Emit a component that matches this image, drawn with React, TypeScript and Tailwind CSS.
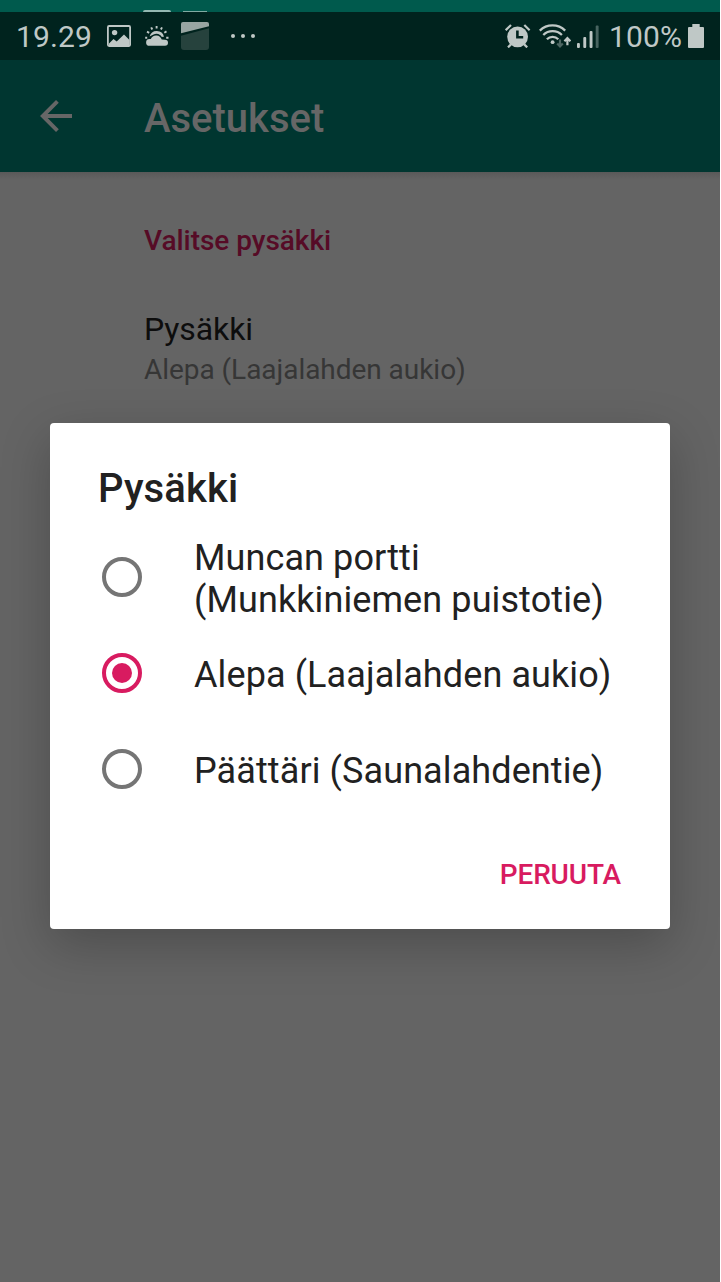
import React from "react";

const ICON = "#bfc8c6";

function ImageIcon() {
  return (
    <svg className="ml-[15px] h-6 w-6 shrink-0" viewBox="0 0 24 24" fill="none">
      <rect x="0.9" y="2" width="22.2" height="20" rx="1.2" stroke={ICON} strokeWidth="1.8" />
      <circle cx="7.6" cy="8.6" r="2.7" fill={ICON} />
      <path d="M2 19.5 6.5 15l3.2 2.5 7.3-7 5.5 5.5V22H2z" fill={ICON} />
    </svg>
  );
}

function WeatherIcon() {
  return (
    <svg className="ml-[14px] h-6 w-6 shrink-0" viewBox="0 0 24 24" fill="none">
      <g stroke={ICON} strokeWidth="1.9">
        <path d="M11.6 2v2.4M6.2 3.3l1.1 2.2M17 3.3l-1.1 2.2M2 7.6l2.2 1.2M21.5 7.4l-2.2 1.3M.2 13.8h2M21.2 13.8h2.3" />
      </g>
      <path d="M4.6 12.6a7.4 7.4 0 0 1 14.4.2c-.8.1-1.4.1-2.1.3a6.2 6.2 0 0 0-8.3-2.7c-1.6.7-2.6 1.4-4 2.2z" fill={ICON} />
      <path d="M4.5 21.8a3.4 3.4 0 0 1 0-6.8h1.3a5.8 5.8 0 0 1 10.9.6l3.3.2a3 3 0 0 1 0 6z" fill={ICON} />
    </svg>
  );
}

function CardIcon() {
  return (
    <svg className="ml-[12px] h-7 w-7 shrink-0" viewBox="0 0 28 28">
      <path d="M0 13.8 28 6.2V25a3 3 0 0 1-3 3H3a3 3 0 0 1-3-3z" fill="#26423d" />
      <path d="M0 11.3V2a2 2 0 0 1 2-2h24a2 2 0 0 1 2 2v2.2z" fill="#98a5a2" />
    </svg>
  );
}

function AlarmIcon() {
  return (
    <svg className="h-6 w-[26px] shrink-0" viewBox="0 0 26 24" fill="none">
      <circle cx="12.6" cy="12.8" r="10.4" fill={ICON} />
      <path d="M.7 6.2 6 1M24.6 6.2 19.3 1M3 23.4l3-3M22.2 23.4l-3-3" stroke={ICON} strokeWidth="2.2" />
      <path d="M12.4 6.4v6.8h5.8" stroke="#00231e" strokeWidth="2.6" />
    </svg>
  );
}

function WifiIcon() {
  return (
    <svg className="ml-[8px] h-6 w-8 shrink-0" viewBox="0 0 32 24" fill="none">
      <g stroke={ICON} strokeWidth="2.3">
        <path d="M.8 6.6a18.2 18.2 0 0 1 25.4 0" />
        <path d="M4.3 11a13.2 13.2 0 0 1 18.6 0" />
        <path d="M7.9 15.2a8 8 0 0 1 11.4 0" />
      </g>
      <circle cx="13.6" cy="18.2" r="1.9" fill={ICON} />
      <path d="M21 15.6v6M18.2 19.4l2.8 3 2.8-3" stroke="#4d6662" strokeWidth="2.2" />
      <path d="M28.4 21.3v-6M25.4 17.3l3-3.1 3 3.1" stroke={ICON} strokeWidth="2.2" />
    </svg>
  );
}

function SignalIcon() {
  return (
    <svg className="ml-[6px] h-6 w-[22px] shrink-0" viewBox="0 0 22 24">
      <rect x="0" y="19" width="2.9" height="5" rx="1" fill={ICON} />
      <rect x="6.3" y="13" width="2.9" height="11" rx="1" fill={ICON} />
      <rect x="12.6" y="7" width="2.9" height="17" rx="1" fill={ICON} />
      <rect x="18.7" y="1.5" width="2.9" height="22.5" rx="1" fill="#486460" />
    </svg>
  );
}

function BatteryIcon() {
  return (
    <svg className="ml-[6px] h-6 w-4 shrink-0" viewBox="0 0 16 24">
      <path d="M4.3 0h7.4v3H15a1 1 0 0 1 1 1v19a1 1 0 0 1-1 1H1a1 1 0 0 1-1-1V4a1 1 0 0 1 1-1h3.3z" fill={ICON} />
    </svg>
  );
}

function Radio({ checked }: { checked: boolean }) {
  return (
    <span
      className={
        checked
          ? "flex h-10 w-10 shrink-0 items-center justify-center rounded-full border-4 border-[#d81b60]"
          : "h-10 w-10 shrink-0 rounded-full border-4 border-[#757575]"
      }
    >
      {checked && <span className="h-5 w-5 rounded-full bg-[#d81b60]" />}
    </span>
  );
}

const stops = [
  { lines: ["Muncan portti", "(Munkkiniemen puistotie)"], checked: false },
  { lines: ["Alepa (Laajalahden aukio)"], checked: true },
  { lines: ["Päättäri (Saunalahdentie)"], checked: false },
];

export default function App() {
  return (
    <div className="relative flex h-[1282px] w-[720px] flex-col overflow-hidden bg-[#646464] font-[Roboto,sans-serif]">
      <div className="flex h-3 shrink-0 items-end bg-[#005a4d] pl-[143px]">
        <span className="h-[2px] w-7 rounded-t-sm bg-[#94b8b2]" />
        <span className="ml-3 h-px w-6 bg-[#80aaa2]" />
      </div>
      <div className="flex h-12 shrink-0 items-center bg-[#00231e] pl-4 pr-4 text-[#bfc8c6]">
        <span className="mt-0.5 w-[76px] whitespace-nowrap text-[30px] leading-[30px] tracking-[0.1px]">19.29</span>
        <ImageIcon />
        <WeatherIcon />
        <CardIcon />
        <span className="ml-[22px] flex gap-[6px]">
          <i className="h-1 w-1 rounded-full bg-[#bfc8c6]" />
          <i className="h-1 w-1 rounded-full bg-[#bfc8c6]" />
          <i className="h-1 w-1 rounded-full bg-[#bfc8c6]" />
        </span>
        <span className="ml-auto flex items-center">
          <AlarmIcon />
          <WifiIcon />
          <SignalIcon />
          <span className="ml-[10px] mt-0.5 w-[73px] whitespace-nowrap text-[30px] leading-[28px] tracking-[0.1px]">100%</span>
          <BatteryIcon />
        </span>
      </div>
      <header className="flex h-28 shrink-0 items-center bg-[#003630] pl-10 text-[#666]">
        <svg className="h-8 w-8 shrink-0" viewBox="0 0 32 32" fill="none" stroke="#666" strokeWidth="3.9">
          <path d="M32 16H3M17.4 1.4 2.8 16l14.6 14.6" />
        </svg>
        <h1 className="ml-[72px] mt-1.5 text-[40px] font-medium leading-[48px]">Asetukset</h1>
      </header>
      <main className="flex flex-1 flex-col bg-[linear-gradient(#595959,#646464_8px)] pl-36 pt-[53px]">
        <h2 className="text-[28px] font-medium leading-8 tracking-[-0.04px] text-[#560b26]">Valitse pysäkki</h2>
        <p className="mt-[53px] text-[32px] leading-[38px] tracking-[-0.1px] text-[#0d0d0d]">Pysäkki</p>
        <p className="mt-[6px] text-[28px] leading-8 tracking-[-0.04px] text-[#363636]">Alepa (Laajalahden aukio)</p>
      </main>

      <section
        role="dialog"
        className="absolute left-[50px] top-[423px] flex h-[506px] w-[620px] flex-col rounded-[4px] bg-white px-12 pt-[42px] text-[#212121] shadow-[0_16px_50px_rgba(0,0,0,0.23)]"
      >
        <h2 className="text-[40px] font-medium leading-[48px] tracking-[0.1px]">Pysäkki</h2>
        <div className="mt-[16px] flex flex-col">
          {stops.map((stop) => (
            <label key={stop.lines[0]} className="flex h-24 items-center pl-1">
              <Radio checked={stop.checked} />
              <span className="ml-[52px] mt-1 whitespace-nowrap text-[36px] leading-[42px] tracking-[0.1px]">
                {stop.lines.map((line) => (
                  <span key={line} className="block">{line}</span>
                ))}
              </span>
            </label>
          ))}
        </div>
        <button className="mr-px mt-[42px] self-end text-[28px] font-medium leading-8 tracking-[-0.15px] text-[#d81b60]">PERUUTA</button>
      </section>
    </div>
  );
}
